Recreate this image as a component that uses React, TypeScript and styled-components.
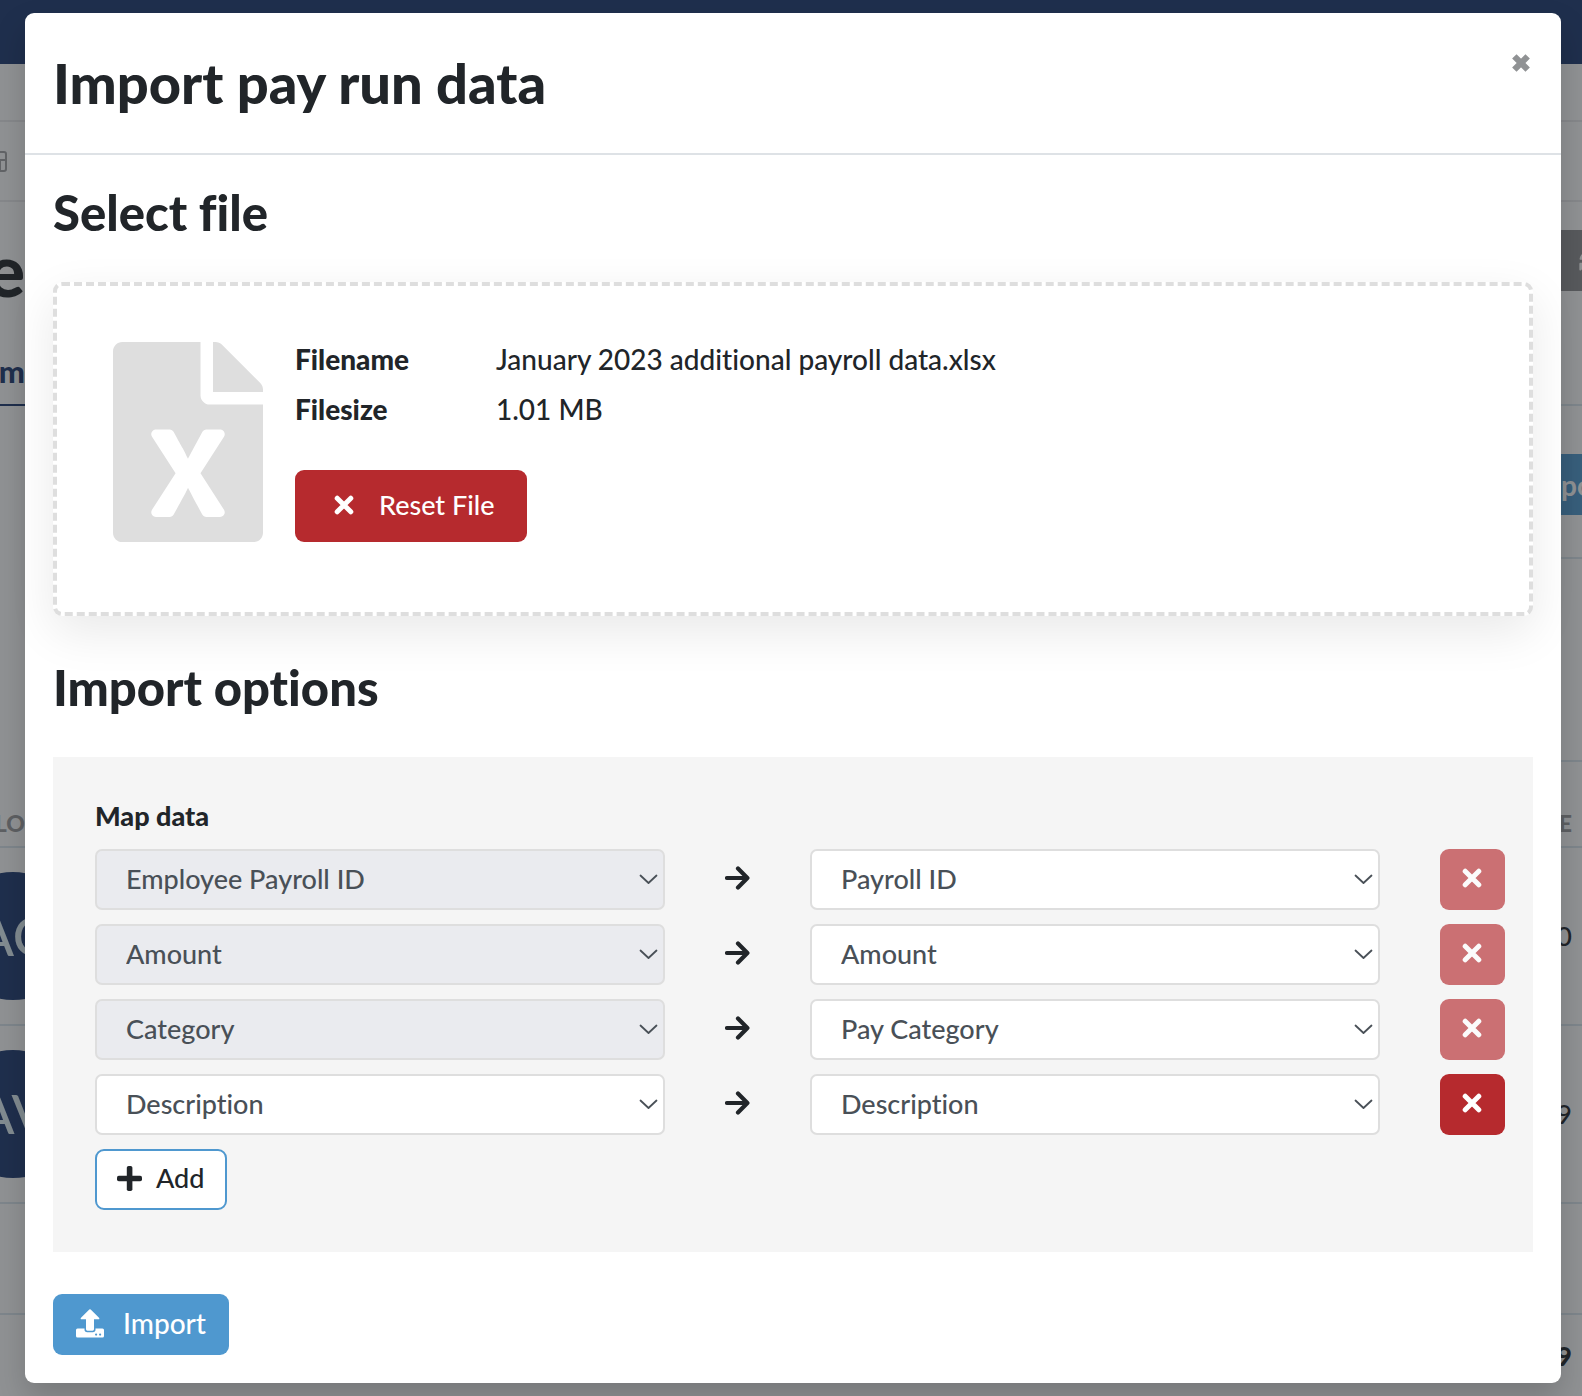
import React, { useState } from "react";
import styled, { createGlobalStyle, css } from "styled-components";
import { FaFileExcel, FaSyncAlt } from "react-icons/fa";

const color = {
  ink: "#212529",
  field: "#495057",
  line: "#dedede",
  rule: "#dee2e6",
  navy: "#1d3971",
  blue: "#4f98cf",
  red: "#b62a2e",
  panel: "#f5f5f5",
  disabled: "#eaebef",
  tableLine: "#dbe6ef",
};

const GlobalStyle = createGlobalStyle`
  *, *::before, *::after { box-sizing: border-box; }
  body {
    margin: 0;
    color: ${color.ink};
    font-family: Lato, "Open Sans", sans-serif;
    font-size: 27px;
    font-weight: 500;
    line-height: 34px;
    font-variant-ligatures: no-common-ligatures;
  }
  h1, h2, h3, dl, dd, p { margin: 0; }
  button, select { font: inherit; }
  svg { flex: none; }
`;

/* ---------- page behind the dialog ---------- */

const Page = styled.div`
  position: relative;
  min-height: 100vh;
  overflow: hidden;
  background: #fff;
`;

const NavBar = styled.div`
  height: 64px;
  background: ${color.navy};
`;

const PageRow = styled.div<{ $height: number; $line?: string; $inset?: boolean }>`
  display: flex;
  justify-content: space-between;
  align-items: center;
  height: ${(p) => p.$height}px;
  margin-left: ${(p) => (p.$inset ? "60px" : "0")};
  border-bottom: 2px solid ${(p) => p.$line ?? "transparent"};
`;

const TitleRow = styled(PageRow)`
  align-items: flex-start;
  padding-top: 28px;
`;

const ActionRow = styled(PageRow)`
  align-items: flex-end;
  padding-bottom: 42px;
`;

const HeadRow = styled(PageRow)`
  align-items: flex-end;
  padding-bottom: 6px;
`;

const TabRow = styled(PageRow)`
  color: ${color.navy};
  font-size: 31px;
  font-weight: 900;
`;

const LeftEdge = styled.div<{ $pad?: number }>`
  display: flex;
  flex: none;
  justify-content: flex-end;
  width: 25px;
  padding-right: ${(p) => p.$pad ?? 0}px;
`;

const RightEdge = styled.div<{ $start?: boolean }>`
  display: flex;
  flex: none;
  justify-content: ${(p) => (p.$start ? "flex-start" : "flex-end")};
  width: 21px;
  margin-left: auto;
  padding-right: ${(p) => (p.$start ? 0 : 10)}px;
`;

const PageTitle = styled.div`
  font-size: 72px;
  font-weight: 900;
  line-height: 78px;
`;

const Tab = styled(LeftEdge)`
  align-self: stretch;
  align-items: center;
  margin-bottom: -2px;
  border-bottom: 2px solid ${color.navy};
`;

const ColumnHead = styled.span`
  color: #9b9b9d;
  font-size: 23px;
  font-weight: 900;
`;

const Avatar = styled.div`
  display: flex;
  flex: none;
  align-items: center;
  justify-content: center;
  width: 128px;
  height: 128px;
  margin-right: -52px;
  border-radius: 50%;
  background: ${color.navy};
  color: #e3f2f8;
  font-size: 54px;
  font-weight: 500;
`;

const EdgeButton = styled.span<{ $bg: string; $pad?: number }>`
  display: flex;
  flex: none;
  align-items: center;
  width: 60px;
  height: 61px;
  padding-left: ${(p) => p.$pad ?? 0}px;
  background: ${(p) => p.$bg};
  color: #fff;
  font-size: 28px;
  font-weight: 700;
`;

const Total = styled.span`
  font-weight: 900;
`;

/* ---------- dialog ---------- */

const Backdrop = styled.div`
  position: absolute;
  inset: 0;
  padding: 13px 21px 13px 25px;
  background: rgba(33, 37, 41, 0.5);
`;

const Dialog = styled.div`
  border-radius: 9px;
  background: #fff;
  box-shadow: 0 16px 32px rgba(0, 0, 0, 0.175);
`;

const DialogHeader = styled.header`
  display: flex;
  align-items: flex-start;
  justify-content: space-between;
  padding: 28px;
  border-bottom: 2px solid ${color.rule};
`;

const DialogTitle = styled.h1`
  font-size: 56px;
  font-weight: 900;
  line-height: 84px;
`;

const CloseButton = styled.button`
  display: flex;
  margin-top: 9px;
  padding: 3px 2px;
  border: 0;
  background: none;
  color: #909294;
`;

const DialogBody = styled.div`
  padding: 27px 28px 28px;
`;

const SectionTitle = styled.h2`
  margin-bottom: 40px;
  font-size: 49px;
  font-weight: 900;
  line-height: 60px;
`;

const DropZone = styled.section`
  display: flex;
  gap: 32px;
  margin-bottom: 41px;
  padding: 56px 56px 70px;
  border: 4px dashed ${color.line};
  border-radius: 9px;
  background: #fff;
  box-shadow: 0 16px 48px rgba(0, 0, 0, 0.09);
`;

const FileGlyph = styled(FaFileExcel)`
  width: 150px;
  height: 200px;
  color: ${color.line};
`;

const FileDetails = styled.dl`
  display: grid;
  grid-template-columns: 201px auto;
  row-gap: 16px;
  margin-bottom: 44px;
  font-size: 28px;
`;

const Term = styled.dt`
  font-weight: 900;
`;

const Detail = styled.dd``;

type Variant = "danger" | "primary" | "outline";

const variants = {
  danger: css`
    height: 72px;
    gap: 18px;
    padding: 0 33px 3px 31px;
    background: ${color.red};
    color: #fff;
  `,
  primary: css`
    gap: 16px;
    padding: 0 23px 3px 19px;
    background: ${color.blue};
    color: #fff;
    font-size: 28px;
  `,
  outline: css`
    gap: 9px;
    padding: 0 21px 3px 15px;
    border: 2px solid ${color.blue};
    background: #fff;
    color: ${color.ink};
  `,
};

const Button = styled.button<{ $variant: Variant }>`
  display: inline-flex;
  align-items: center;
  height: 61px;
  border: 0;
  border-radius: 9px;
  ${(p) => variants[p.$variant]}
`;

const IconSlot = styled.span`
  display: flex;
  justify-content: center;
  width: 35px;
`;

const MapPanel = styled.section`
  margin-bottom: 42px;
  padding: 42px 28px 42px 42px;
  background: ${color.panel};
`;

const MapTitle = styled.h3`
  margin-bottom: 16px;
  font-size: 27px;
  font-weight: 900;
`;

const MapRow = styled.div`
  display: grid;
  grid-template-columns: 1fr 145px 1fr 60px 65px;
  align-items: center;
  margin-bottom: 14px;
`;

const ArrowCell = styled.span`
  display: flex;
  justify-content: center;
  padding-bottom: 4px;
`;

const SelectBox = styled.span`
  position: relative;
  display: block;
`;

const Select = styled.select`
  display: block;
  width: 100%;
  height: 61px;
  padding: 0 40px 1px 29px;
  border: 2px solid ${color.line};
  border-radius: 7px;
  appearance: none;
  background: #fff;
  color: ${color.field};

  &:disabled {
    background: ${color.disabled};
    color: ${color.field};
    opacity: 1;
  }
`;

const Chevron = styled.svg`
  position: absolute;
  top: 25px;
  right: 7px;
  pointer-events: none;
`;

const RemoveButton = styled.button`
  grid-column: 5;
  display: flex;
  align-items: center;
  justify-content: center;
  height: 61px;
  padding: 0 1px 4px 0;
  border: 0;
  border-radius: 9px;
  background: ${color.red};
  color: #fff;

  &:disabled {
    opacity: 0.65;
  }
`;

/* ---------- icons ---------- */

const CrossIcon = () => (
  <svg width="20" height="20" viewBox="0 0 20 20" aria-hidden="true">
    <path d="M3.2 3.2l13.6 13.6M16.8 3.2L3.2 16.8" fill="none" stroke="currentColor" strokeWidth="5" strokeLinecap="round" />
  </svg>
);

const CloseIcon = () => (
  <svg width="20" height="20" viewBox="0 0 18 18" aria-hidden="true">
    <path d="M3 3l12 12M15 3L3 15" fill="none" stroke="currentColor" strokeWidth="5.6" />
  </svg>
);

const ArrowIcon = () => (
  <svg width="25" height="24" viewBox="0 0 25 24" aria-hidden="true">
    <path d="M2 12h20M13 2.600L22.400 12 13 21.400" fill="none" stroke="currentColor" strokeWidth="4.200" strokeLinecap="round" strokeLinejoin="round" />
  </svg>
);

const PlusIcon = () => (
  <svg width="25" height="25" viewBox="0 0 25 25" aria-hidden="true">
    <rect x="9.8" y="0" width="5.6" height="25" rx="1.8" fill="currentColor" />
    <rect x="0" y="9.7" width="25" height="5.6" rx="1.8" fill="currentColor" />
  </svg>
);

const UploadIcon = () => (
  <svg width="28" height="29" viewBox="0 0 28 29" aria-hidden="true" fill="currentColor">
    <path d="M13.300 .5q.7-.7 1.400 0l8.300 8.300q1 1.400-.7 1.500H18v10q0 1.400-1.400 1.400h-5.200Q10 21.700 10 20.300v-10H5.700q-1.700-.1-.7-1.500z" />
    <path
      fillRule="evenodd"
      d="M1.500 19.500h7v1q0 2.700 2.700 2.700h5.600q2.700 0 2.700-2.700v-1h7q1.500 0 1.500 1.500v6q0 1.500-1.500 1.500h-25Q0 28.500 0 27v-6q0-1.500 1.500-1.500zM19 25.600a1 1 0 1 0 2.200 0 1 1 0 1 0-2.200 0zm4 0a1 1 0 1 0 2.200 0 1 1 0 1 0-2.200 0z"
    />
  </svg>
);

const CalendarIcon = () => (
  <svg width="20" height="22" viewBox="0 0 20 22" aria-hidden="true" fill="none" stroke="#a2a3a5" strokeWidth="2">
    <rect x="1" y="2" width="18" height="19" rx="2" />
    <path d="M1 10h18M13 10v11" />
  </svg>
);

/* ---------- content ---------- */

interface Mapping {
  source: string;
  target: string;
  locked: boolean;
}

const initialMappings: Mapping[] = [
  { source: "Employee Payroll ID", target: "Payroll ID", locked: true },
  { source: "Amount", target: "Amount", locked: true },
  { source: "Category", target: "Pay Category", locked: true },
  { source: "Description", target: "Description", locked: false },
];

function Dropdown({ label, value, disabled }: { label: string; value: string; disabled?: boolean }) {
  return (
    <SelectBox>
      <Select aria-label={label} defaultValue={value} disabled={disabled}>
        <option>{value}</option>
      </Select>
      <Chevron width="19" height="11" viewBox="0 0 19 11" aria-hidden="true">
        <path d="M1.500 1.500l8 7.500 8-7.500" fill="none" stroke={color.field} strokeWidth="1.800" strokeLinecap="round" strokeLinejoin="round" />
      </Chevron>
    </SelectBox>
  );
}

function PayRunPage() {
  return (
    <>
      <NavBar />
      <PageRow $height={58} $line="#ebebed" />
      <PageRow $height={80} $line="#ebebed">
        <LeftEdge $pad={18}>
          <CalendarIcon />
        </LeftEdge>
      </PageRow>
      <TitleRow $height={136}>
        <LeftEdge>
          <PageTitle>e</PageTitle>
        </LeftEdge>
        <RightEdge $start>
          <EdgeButton $bg="#8f8f90" $pad={18}>
            <FaSyncAlt size={22} />
          </EdgeButton>
        </RightEdge>
      </TitleRow>
      <TabRow $height={68} $line={color.tableLine}>
        <Tab>m</Tab>
      </TabRow>
      <ActionRow $height={153} $line={color.tableLine} $inset>
        <RightEdge $start>
          <EdgeButton $bg={color.blue}>po</EdgeButton>
        </RightEdge>
      </ActionRow>
      <PageRow $height={203} $line={color.tableLine} $inset />
      <HeadRow $height={86} $line={color.tableLine}>
        <LeftEdge>
          <ColumnHead>LO</ColumnHead>
        </LeftEdge>
        <RightEdge>
          <ColumnHead>E</ColumnHead>
        </RightEdge>
      </HeadRow>
      <PageRow $height={178} $line={color.tableLine}>
        <LeftEdge>
          <Avatar>AC</Avatar>
        </LeftEdge>
        <RightEdge>0</RightEdge>
      </PageRow>
      <PageRow $height={178} $line={color.tableLine}>
        <LeftEdge>
          <Avatar>AV</Avatar>
        </LeftEdge>
        <RightEdge>9</RightEdge>
      </PageRow>
      <PageRow $height={111} $line={color.tableLine} />
      <PageRow $height={84}>
        <RightEdge>
          <Total>9</Total>
        </RightEdge>
      </PageRow>
    </>
  );
}

export default function App() {
  const [mappings, setMappings] = useState(initialMappings);

  const add = () => setMappings([...mappings, { source: "Description", target: "Description", locked: false }]);
  const remove = (index: number) => setMappings(mappings.filter((_, i) => i !== index));

  return (
    <Page>
      <GlobalStyle />
      <PayRunPage />
      <Backdrop>
        <Dialog role="dialog" aria-labelledby="dialog-title">
          <DialogHeader>
            <DialogTitle id="dialog-title">Import pay run data</DialogTitle>
            <CloseButton aria-label="Close">
              <CloseIcon />
            </CloseButton>
          </DialogHeader>
          <DialogBody>
            <SectionTitle>Select file</SectionTitle>
            <DropZone>
              <FileGlyph />
              <div>
                <FileDetails>
                  <Term>Filename</Term>
                  <Detail>January 2023 additional payroll data.xlsx</Detail>
                  <Term>Filesize</Term>
                  <Detail>1.01 MB</Detail>
                </FileDetails>
                <Button $variant="danger">
                  <IconSlot>
                    <CrossIcon />
                  </IconSlot>
                  Reset File
                </Button>
              </div>
            </DropZone>
            <SectionTitle>Import options</SectionTitle>
            <MapPanel>
              <MapTitle>Map data</MapTitle>
              {mappings.map((m, i) => (
                <MapRow key={i}>
                  <Dropdown label={`Source field ${i + 1}`} value={m.source} disabled={m.locked} />
                  <ArrowCell>
                    <ArrowIcon />
                  </ArrowCell>
                  <Dropdown label={`File column ${i + 1}`} value={m.target} />
                  <RemoveButton aria-label="Remove mapping" disabled={m.locked} onClick={() => remove(i)}>
                    <CrossIcon />
                  </RemoveButton>
                </MapRow>
              ))}
              <Button $variant="outline" onClick={add}>
                <IconSlot>
                  <PlusIcon />
                </IconSlot>
                Add
              </Button>
            </MapPanel>
            <Button $variant="primary">
              <IconSlot>
                <UploadIcon />
              </IconSlot>
              Import
            </Button>
          </DialogBody>
        </Dialog>
      </Backdrop>
    </Page>
  );
}
